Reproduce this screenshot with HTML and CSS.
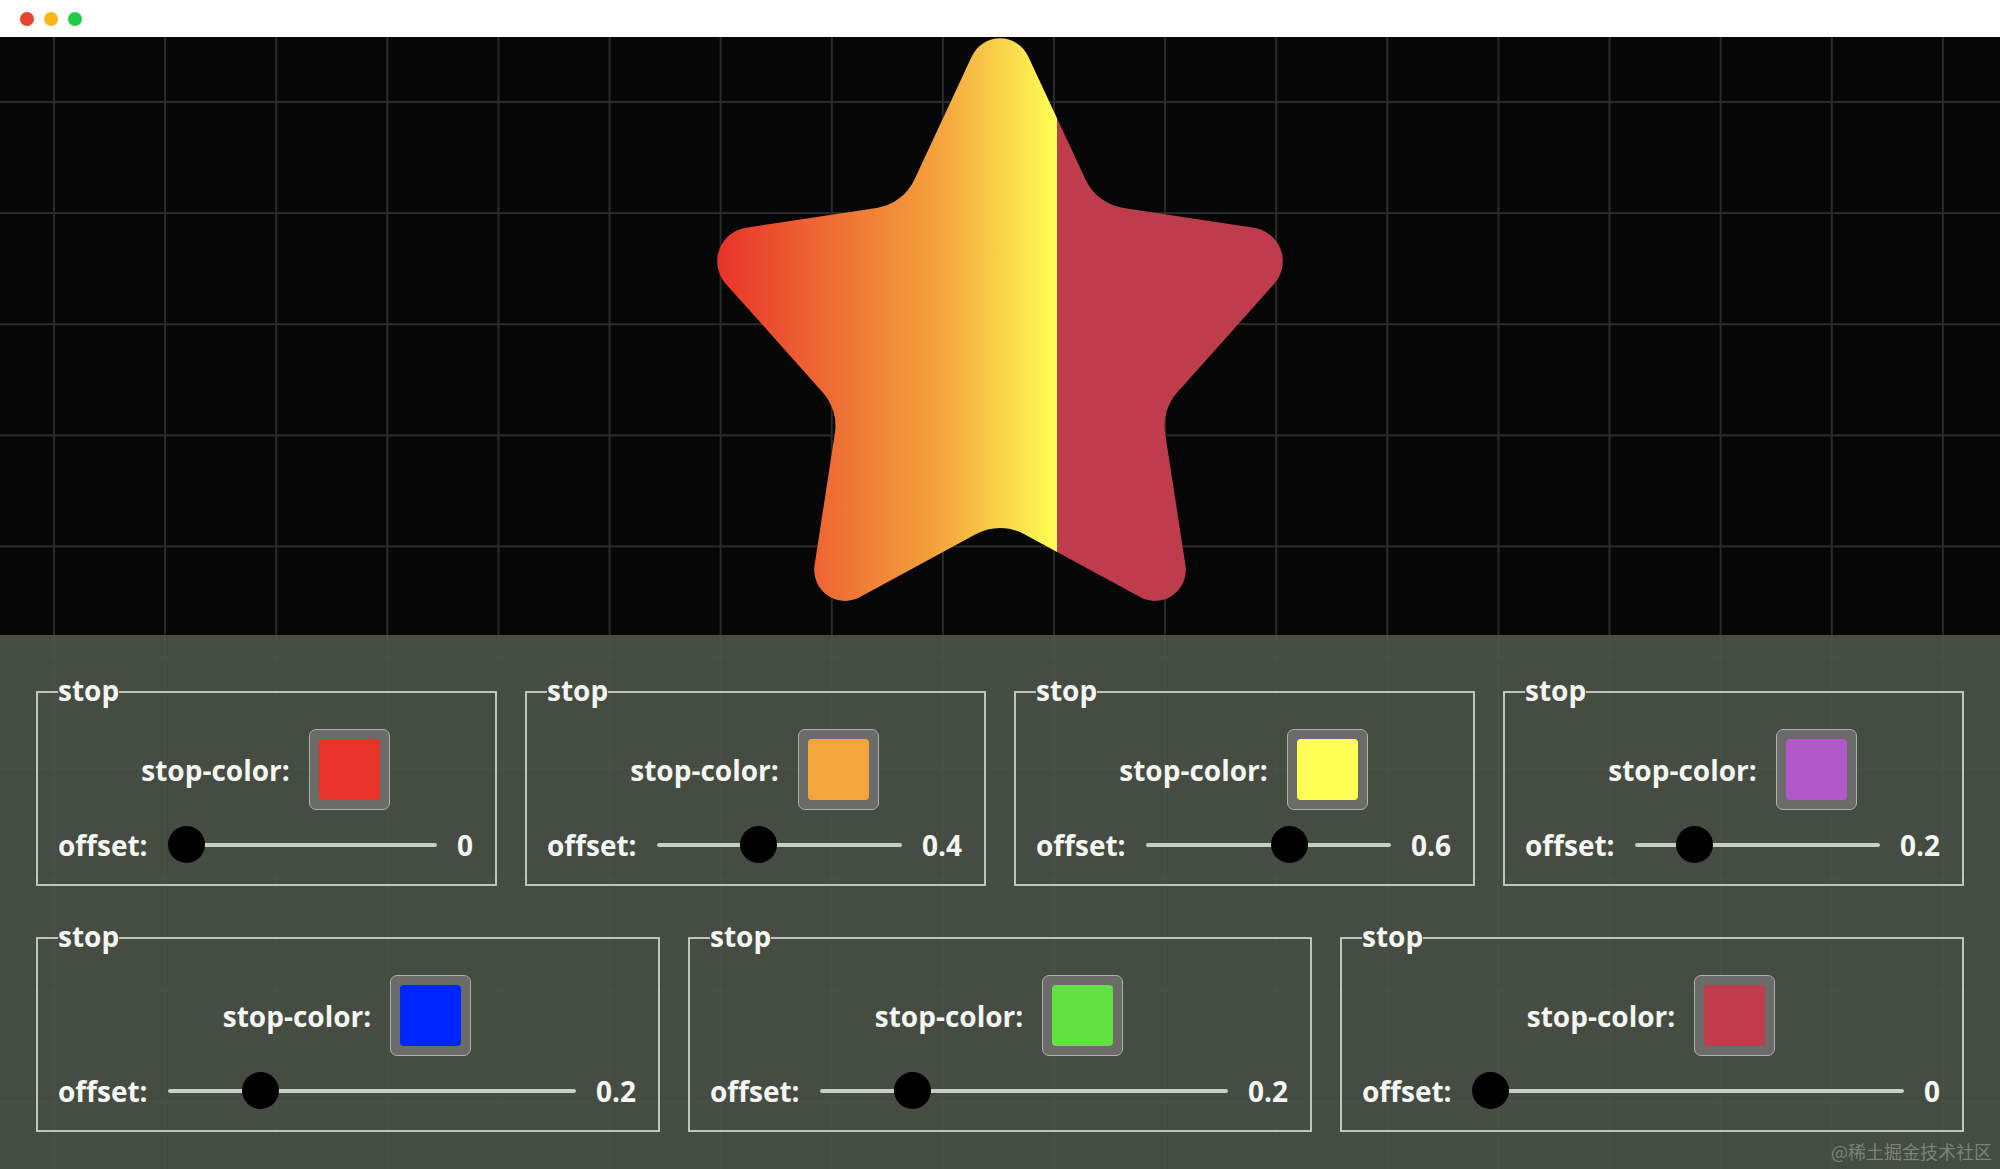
FILE: index.html
```html
<!DOCTYPE html>
<html lang="zh-CN">
<head>
<meta charset="utf-8">
<title>linearGradient stop</title>
<link rel="stylesheet" href="styles.css">
</head>
<body>
<div class="window">
  <header class="titlebar">
    <span class="light light-red"></span>
    <span class="light light-yellow"></span>
    <span class="light light-green"></span>
  </header>
  <main class="canvas">
    <section class="stage">
      <svg class="star" width="2000" height="598" viewBox="0 37 2000 598" xmlns="http://www.w3.org/2000/svg">
        <defs>
          <linearGradient id="grad">
            <stop offset="0" stop-color="#e8332a"/>
            <stop offset="0.4" stop-color="#f4a63d"/>
            <stop offset="0.6" stop-color="#ffff55"/>
            <stop offset="0.2" stop-color="#b259c9"/>
            <stop offset="0.2" stop-color="#0026ff"/>
            <stop offset="0.2" stop-color="#62e044"/>
            <stop offset="0" stop-color="#be3c4b"/>
          </linearGradient>
        </defs>
        <path fill="url(#grad)" d="M1028.11 56.27 L1085.67 179.71 A50 50 0 0 0 1123.50 207.99 L1253.81 227.63 A34 34 0 0 1 1274.10 283.92 L1177.22 392.39 A50 50 0 0 0 1165.10 433.32 L1185.45 565.13 A31 31 0 0 1 1139.99 597.10 L1023.90 533.99 A50 50 0 0 0 976.10 533.99 L860.01 597.10 A31 31 0 0 1 814.55 565.13 L834.90 433.32 A50 50 0 0 0 822.78 392.39 L725.90 283.92 A34 34 0 0 1 746.19 227.63 L876.50 207.99 A50 50 0 0 0 914.33 179.71 L971.89 56.27 A31 31 0 0 1 1028.11 56.27 Z"/>
      </svg>
    </section>
    <section class="panel">
      <fieldset class="stop">
        <legend>stop</legend>
        <div class="color-row"><span class="label">stop-color:</span><span class="swatch"><span class="fill c-red"></span></span></div>
        <div class="offset-row"><span class="label">offset:</span><input class="slider" type="range" min="0" max="1" step="0.1" value="0"><span class="value">0</span></div>
      </fieldset>
      <fieldset class="stop">
        <legend>stop</legend>
        <div class="color-row"><span class="label">stop-color:</span><span class="swatch"><span class="fill c-orange"></span></span></div>
        <div class="offset-row"><span class="label">offset:</span><input class="slider" type="range" min="0" max="1" step="0.1" value="0.4"><span class="value">0.4</span></div>
      </fieldset>
      <fieldset class="stop">
        <legend>stop</legend>
        <div class="color-row"><span class="label">stop-color:</span><span class="swatch"><span class="fill c-yellow"></span></span></div>
        <div class="offset-row"><span class="label">offset:</span><input class="slider" type="range" min="0" max="1" step="0.1" value="0.6"><span class="value">0.6</span></div>
      </fieldset>
      <fieldset class="stop">
        <legend>stop</legend>
        <div class="color-row"><span class="label">stop-color:</span><span class="swatch"><span class="fill c-purple"></span></span></div>
        <div class="offset-row"><span class="label">offset:</span><input class="slider" type="range" min="0" max="1" step="0.1" value="0.2"><span class="value">0.2</span></div>
      </fieldset>
      <fieldset class="stop">
        <legend>stop</legend>
        <div class="color-row"><span class="label">stop-color:</span><span class="swatch"><span class="fill c-blue"></span></span></div>
        <div class="offset-row"><span class="label">offset:</span><input class="slider" type="range" min="0" max="1" step="0.1" value="0.2"><span class="value">0.2</span></div>
      </fieldset>
      <fieldset class="stop">
        <legend>stop</legend>
        <div class="color-row"><span class="label">stop-color:</span><span class="swatch"><span class="fill c-green"></span></span></div>
        <div class="offset-row"><span class="label">offset:</span><input class="slider" type="range" min="0" max="1" step="0.1" value="0.2"><span class="value">0.2</span></div>
      </fieldset>
      <fieldset class="stop">
        <legend>stop</legend>
        <div class="color-row"><span class="label">stop-color:</span><span class="swatch"><span class="fill c-crimson"></span></span></div>
        <div class="offset-row"><span class="label">offset:</span><input class="slider" type="range" min="0" max="1" step="0.1" value="0"><span class="value">0</span></div>
      </fieldset>
    </section>
  </main>
  <div class="watermark">@稀土掘金技术社区</div>
</div>
</body>
</html>
```

FILE: styles.css
```css
* { box-sizing: border-box; }

html, body {
  margin: 0;
  padding: 0;
}

body {
  width: 2000px;
  height: 1169px;
  overflow: hidden;
  background: #ffffff;
  font-family: "Open Sans", "Noto Sans CJK SC", sans-serif;
}

.window {
  position: relative;
  width: 2000px;
  height: 1169px;
  display: flex;
  flex-direction: column;
}

.titlebar {
  flex: none;
  height: 37px;
  background: #ffffff;
  display: flex;
  align-items: center;
  gap: 10px;
  padding-left: 20px;
}

.light {
  width: 14px;
  height: 14px;
  border-radius: 50%;
}
.light-red { background: #e9432d; }
.light-yellow { background: #f7b718; }
.light-green { background: #24cb45; }

.canvas {
  flex: 1;
  display: flex;
  flex-direction: column;
  background-color: #060606;
  background-image:
    linear-gradient(to right, #2a2a2a 0, #2a2a2a 2px, transparent 2px),
    linear-gradient(to bottom, #2a2a2a 0, #2a2a2a 2px, transparent 2px);
  background-size: 111.11px 111.11px;
  background-position: 53px 64px;
}

.stage {
  flex: none;
  height: 598px;
}

.star {
  display: block;
}

.panel {
  flex: 1;
  background: rgba(74, 82, 71, 0.93);
  padding: 40px 36px 0;
  display: flex;
  flex-wrap: wrap;
  align-content: flex-start;
  column-gap: 28px;
  row-gap: 35px;
}

.stop {
  flex: 1 1 400px;
  min-width: 0;
  margin: 0;
  border: 2px solid #bfc4bc;
  padding: 21px 22px 21px 20px;
  color: #f5f6f3;
  font-size: 28px;
  font-weight: 700;
}

.stop legend {
  padding: 0 0 3px;
  line-height: 30px;
  font-size: 28px;
  font-weight: 700;
}

.label {
  line-height: 30px;
  white-space: nowrap;
}

.color-row {
  height: 81px;
  display: flex;
  justify-content: center;
  align-items: center;
  gap: 19px;
}

.swatch {
  width: 81px;
  height: 81px;
  padding: 9px;
  background: #6b6c6a;
  border: 1px solid #aeb0ac;
  border-radius: 7px;
  display: flex;
}

.fill {
  flex: 1;
  border-radius: 4px;
}
.c-red { background: #e8332a; }
.c-orange { background: #f4a63d; }
.c-yellow { background: #ffff55; }
.c-purple { background: #b259c9; }
.c-blue { background: #0026ff; }
.c-green { background: #62e044; }
.c-crimson { background: #be3c4b; }

.offset-row {
  margin-top: 16px;
  height: 37px;
  display: flex;
  align-items: center;
  gap: 20px;
}

.value {
  line-height: 30px;
}

.slider {
  flex: 1;
  min-width: 0;
  margin: 0;
  height: 37px;
  -webkit-appearance: none;
  appearance: none;
  background: transparent;
}

.slider::-webkit-slider-runnable-track {
  height: 4px;
  background: #c9cec6;
  border-radius: 2px;
  border: none;
}

.slider::-webkit-slider-thumb {
  -webkit-appearance: none;
  appearance: none;
  width: 37px;
  height: 37px;
  margin-top: -16.5px;
  border: none;
  border-radius: 50%;
  background: #000000;
}

.watermark {
  position: absolute;
  right: 8px;
  bottom: 7px;
  font-family: "Noto Sans CJK SC", sans-serif;
  font-size: 18px;
  line-height: 22px;
  color: rgba(175, 180, 172, 0.55);
}
```
